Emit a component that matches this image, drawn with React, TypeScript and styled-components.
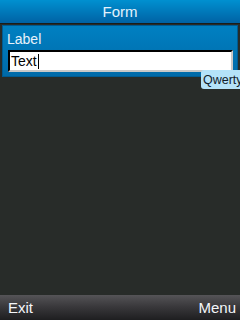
import styled, { createGlobalStyle } from "styled-components";

const GlobalStyle = createGlobalStyle`
  html, body {
    margin: 0;
    padding: 0;
    background: #282c29;
  }
  body {
    font-family: "Liberation Sans", Arial, sans-serif;
  }
`;

const App = () => {
  return (
    <Screen>
      <GlobalStyle />
      <TitleBar>Form</TitleBar>
      <Content>
        <FieldPanel>
          <FieldLabel>Label</FieldLabel>
          <InputBox>
            Text
            <Caret />
          </InputBox>
        </FieldPanel>
        <InputMode>Qwerty</InputMode>
      </Content>
      <SoftKeys>
        <SoftKey>Exit</SoftKey>
        <SoftKey>Menu</SoftKey>
      </SoftKeys>
    </Screen>
  );
};

const Screen = styled.div`
  width: 240px;
  height: 320px;
  display: flex;
  flex-direction: column;
  background: #282c29;
  overflow: hidden;
`;

const TitleBar = styled.div`
  height: 23px;
  display: flex;
  align-items: center;
  justify-content: center;
  background: linear-gradient(#0090d0, #0062a4);
  color: #e4f2fc;
  font-size: 15px;
  border-bottom: 1px solid #1a1d1b;
`;

const Content = styled.div`
  flex: 1;
  position: relative;
  padding: 1px 2px 0 2px;
`;

const FieldPanel = styled.div`
  height: 52px;
  box-sizing: border-box;
  padding: 5px 4px 0 5px;
  background: linear-gradient(#0080c2, #006aa8);
  border: 1px solid #005a90;
`;

const FieldLabel = styled.div`
  color: #e8f2fa;
  font-size: 14px;
  line-height: 16px;
  height: 19px;
  margin-left: -1px;
`;

const InputBox = styled.div`
  height: 22px;
  box-sizing: border-box;
  display: flex;
  align-items: center;
  padding-left: 1px;
  background: #fff;
  color: #000;
  font-size: 14px;
  border-top: 2px solid #000;
  border-left: 2px solid #000;
  border-right: 2px solid #c8c8c8;
  border-bottom: 2px solid #c8c8c8;
`;

const Caret = styled.span`
  display: inline-block;
  width: 1px;
  height: 15px;
  margin-left: 1px;
  background: #000;
`;

const InputMode = styled.div`
  position: absolute;
  top: 46px;
  right: 0;
  width: 39px;
  height: 19px;
  box-sizing: border-box;
  padding-left: 2px;
  display: flex;
  align-items: center;
  background: #b4e2f8;
  color: #10202a;
  font-size: 12.5px;
  border-radius: 3px 0 0 3px;
  white-space: nowrap;
  overflow: hidden;
`;

const SoftKeys = styled.div`
  height: 25px;
  display: flex;
  align-items: center;
  justify-content: space-between;
  padding: 0 4px 0 8px;
  background: linear-gradient(#555457, #3a393c 45%, #1e1e20);
`;

const SoftKey = styled.span`
  color: #f4f6fa;
  font-size: 15px;
`;

export default App;
